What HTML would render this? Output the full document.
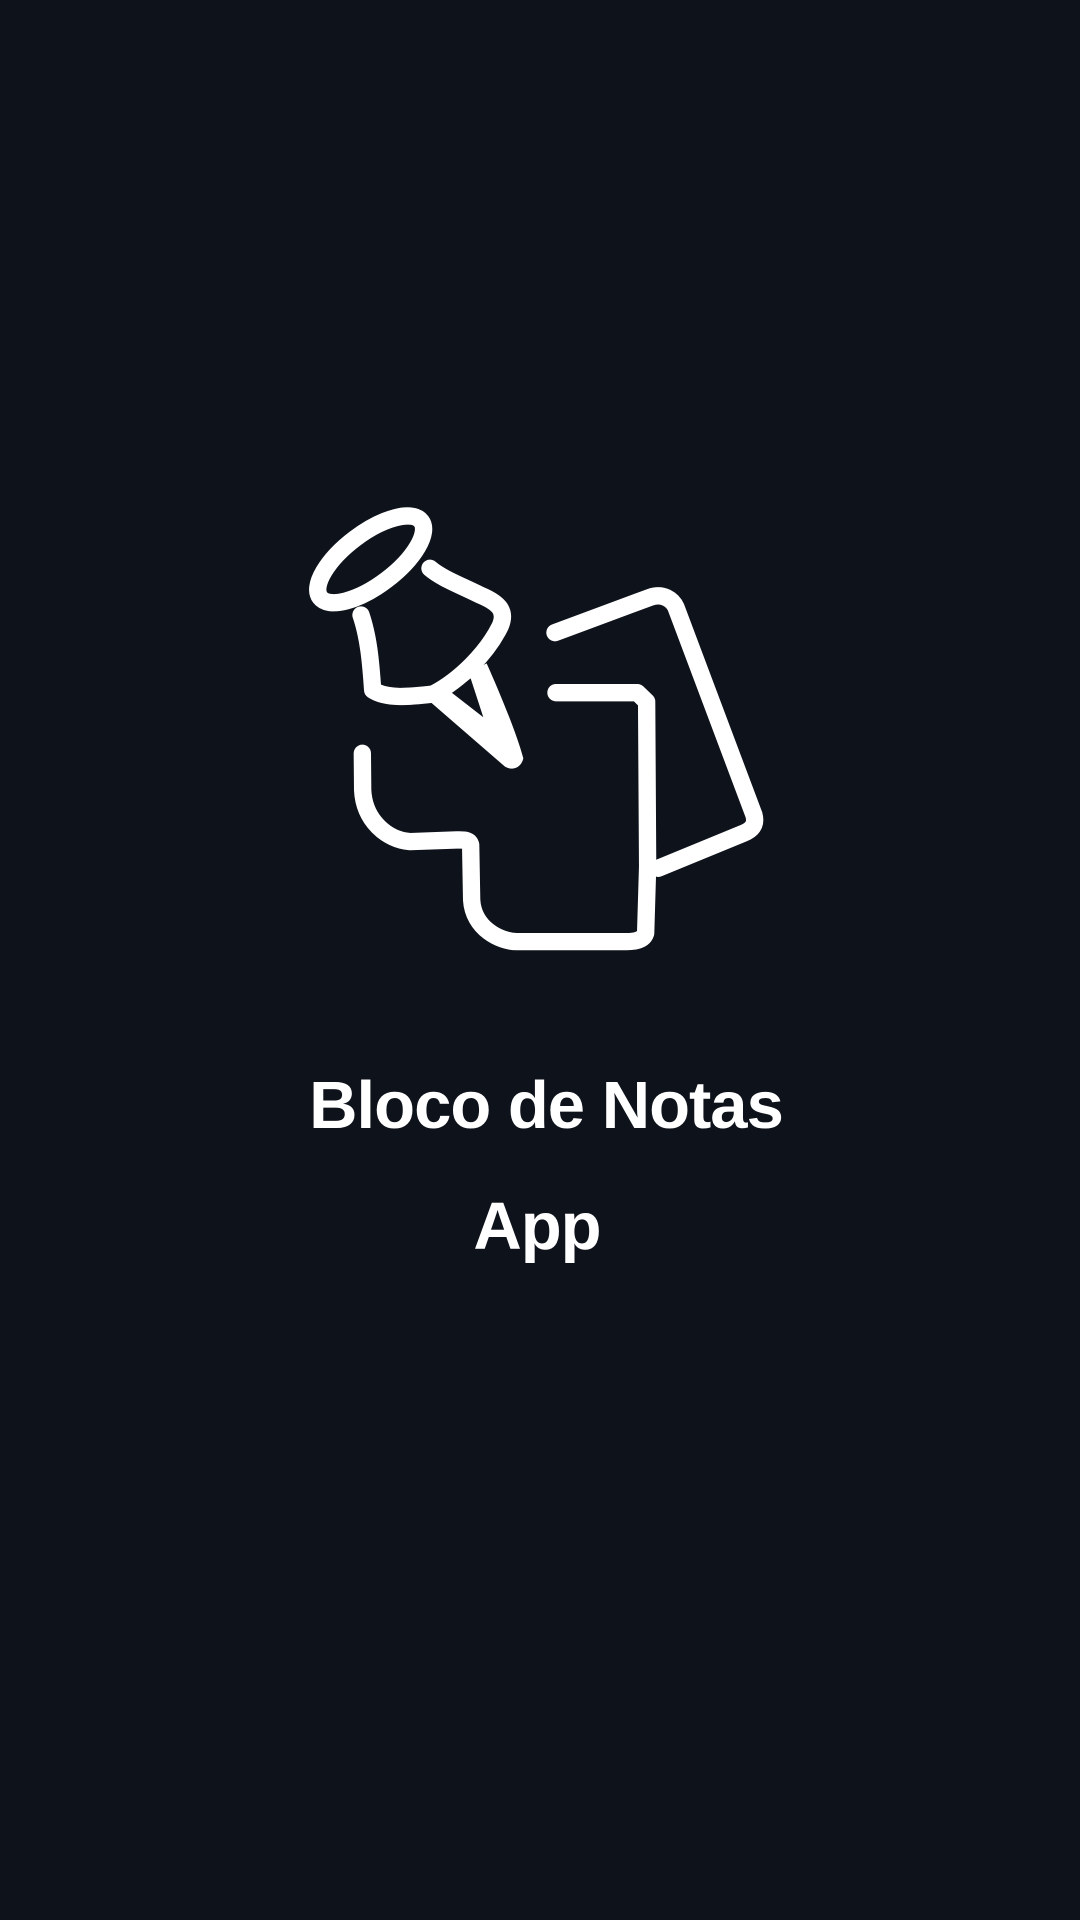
<!DOCTYPE html>
<html><head><meta charset="utf-8"><style>
html,body{margin:0;padding:0;background:#0e121b;}
body{width:1080px;height:1920px;position:relative;overflow:hidden;}
.t{position:absolute;left:0;width:1092px;text-align:center;color:#fff;font-family:"Liberation Sans",sans-serif;font-weight:bold;font-size:67px;letter-spacing:-1px;line-height:1;}
</style></head><body>
<svg width="1080" height="1920" style="position:absolute;left:0;top:0">
<g transform="translate(300,500) scale(0.3333)" fill="none" stroke="#fff" stroke-width="52" stroke-linecap="round" stroke-linejoin="round">
<ellipse cx="212" cy="178" rx="190" ry="78" transform="rotate(-37 212 178)"/>
<path d="M183 345 C205 410,212 480,218 570 C260 598,330 590,400 582 C480 540,560 460,600 380 C620 335,600 310,540 285 C480 255,425 235,390 205"/>
<path d="M765 398 L1050 292 C1090 278,1118 300,1128 322 L1362 945 C1370 975,1355 990,1330 1000 L1075 1105"/>
<path d="M768 578 L1012 578 L1040 605 L1043 1100 L1037 1300 C1030 1322,1000 1325,980 1325 L650 1325 C600 1325,520 1285,515 1200 L512 1035 C508 1018,490 1020,470 1020 L330 1025 C260 1020,192 960,188 870 L187 760"/>
</g>
<g transform="translate(300,500) scale(0.3333)" fill="#fff" stroke="none">
<path fill-rule="evenodd" d="M390 605 L530 505 L560 490 C600 580,650 700,670 775 C665 800,640 815,615 800 Z M455 578 L512 535 L550 652 Z"/>
</g>
</svg>
<div class="t" style="top:1072px">Bloco de Notas</div>
<div class="t" style="top:1193px;left:-9px">App</div>
</body></html>
